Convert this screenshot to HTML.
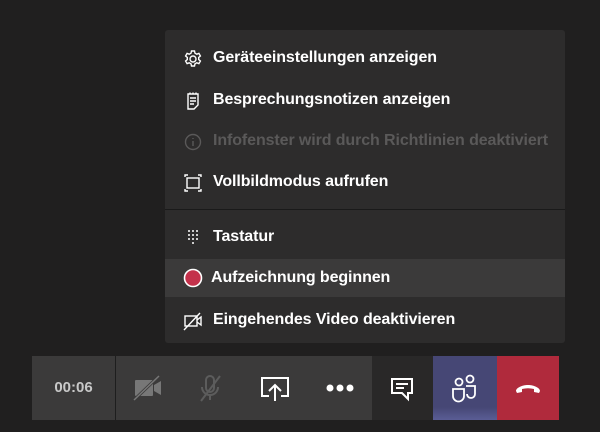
<!DOCTYPE html><html><head><style>
body{margin:0;width:600px;height:432px;background:#201f1f;font-family:"Liberation Sans",sans-serif;position:relative;overflow:hidden}
.menu{position:absolute;left:165px;top:30px;width:400px;height:313px;background:#2d2c2c;border-radius:3px}
.row{position:absolute;left:0;width:400px;height:40px;color:#fff;font-size:16px;font-weight:bold;}
.row span{position:absolute;left:48px;top:11px;letter-spacing:-0.1px}
.row svg{position:absolute;left:18px;top:11px}
.sep{position:absolute;left:0;top:179px;width:400px;height:1px;background:#1a1a1a}
.bar{position:absolute;top:356px;height:64px}
</style></head><body>
<div class="menu">
<div class="row" style="top:8px"><svg width="20" height="20" viewBox="0 0 20 20" fill="none" stroke="#fff" stroke-width="1.4"><circle cx="10" cy="10" r="3"/><path d="M8.5 2h3l.5 2.2 1.8 1 2.1-.8 1.5 2.6-1.7 1.5v2l1.7 1.5-1.5 2.6-2.1-.8-1.8 1-.5 2.2h-3l-.5-2.2-1.8-1-2.1.8-1.5-2.6 1.7-1.5v-2L2.6 7l1.5-2.6 2.1.8 1.8-1z"/></svg><span>Geräteeinstellungen anzeigen</span></div>
<div class="row" style="top:50px"><svg width="20" height="20" viewBox="0 0 20 20" fill="none" stroke="#fff" stroke-width="1.4"><path d="M5 3h10v11l-4 4H5z M7 7h6M7 10h6M7 13h4M7 1.5v2M10 1.5v2M13 1.5v2"/></svg><span>Besprechungsnotizen anzeigen</span></div>
<div class="row" style="top:91px;color:#5a5959"><svg width="20" height="20" viewBox="0 0 20 20" fill="none" stroke="#5a5959" stroke-width="1.4"><circle cx="10" cy="10" r="7.5"/><path d="M10 9v5M10 6v1"/></svg><span>Infofenster wird durch Richtlinien deaktiviert</span></div>
<div class="row" style="top:132px"><svg width="20" height="20" viewBox="0 0 20 20" fill="none" stroke="#fff" stroke-width="1.4"><rect x="4" y="5" width="12" height="10"/><path d="M2 4v-2h3M15 2h3v2M18 16v2h-3M5 18H2v-2"/></svg><span>Vollbildmodus aufrufen</span></div>
<div class="sep"></div>
<div class="row" style="top:187px"><svg width="20" height="20" viewBox="0 0 20 20" fill="#fff"><circle cx="6" cy="3" r="1"/><circle cx="10" cy="3" r="1"/><circle cx="14" cy="3" r="1"/><circle cx="6" cy="7" r="1"/><circle cx="10" cy="7" r="1"/><circle cx="14" cy="7" r="1"/><circle cx="6" cy="11" r="1"/><circle cx="10" cy="11" r="1"/><circle cx="14" cy="11" r="1"/><circle cx="10" cy="15" r="1"/></svg><span>Tastatur</span></div>
<div class="row" style="top:229px;height:38px;background:#3b3a3a"><svg width="20" height="20" viewBox="0 0 20 20" style="top:9px"><circle cx="10" cy="10" r="8.5" fill="#c4314b" stroke="#fff" stroke-width="1.6"/></svg><span style="left:46px;top:10px">Aufzeichnung beginnen</span></div>
<div class="row" style="top:270px"><svg width="20" height="20" viewBox="0 0 20 20" fill="none" stroke="#fff" stroke-width="1.4"><rect x="2" y="5" width="12" height="10"/><path d="M14 9l4-3v8l-4-3M1 19L17 2"/></svg><span>Eingehendes Video deaktivieren</span></div>
</div>
<div class="bar" style="left:32px;width:83px;background:#3b3a3a;color:#c8c8c8;font-weight:bold;font-size:15px;text-align:center;line-height:64px">00:06</div>
<div class="bar" style="left:115px;width:1px;background:#1e1e1e"></div>
<div class="bar" style="left:116px;width:256px;background:#3b3a3a"></div>
<svg class="bar" style="left:116px" width="256" height="64" viewBox="0 0 256 64">
<g fill="#777"><rect x="19" y="24" width="18" height="16" rx="1"/><path d="M38 29l7-4v14l-7-4z"/></g><path d="M18 44L43 20" stroke="#3b3a3a" stroke-width="3"/><path d="M18 44L43 20" stroke="#777" stroke-width="1.5"/>
<g stroke="#5c5c5c" stroke-width="2" fill="none"><rect x="90" y="20" width="8" height="16" rx="4"/><path d="M86 31a8 8 0 0016 0M94 39v5M85 45l19-25"/></g>
<g stroke="#fff" stroke-width="2" fill="none"><path d="M153 40h-7V22h26v18h-7"/><path d="M159 45V30M153 35l6-6 6 6"/></g>
<g fill="#fff"><circle cx="214" cy="32" r="3.5"/><circle cx="224" cy="32" r="3.5"/><circle cx="234" cy="32" r="3.5"/></g>
</svg>
<div class="bar" style="left:372px;width:61px;background:#292828"></div>
<svg class="bar" style="left:372px" width="61" height="64"><g stroke="#fff" stroke-width="2" fill="none"><path d="M20 23h20v14h-4v6l-6-6H20z"/><path d="M24 28h12M24 32h8"/></g></svg>
<div class="bar" style="left:433px;width:64px;background:linear-gradient(#464775,#464775 80%,#5a5d95)"></div>
<svg class="bar" style="left:433px" width="64" height="64"><g stroke="#fff" stroke-width="1.8" fill="none"><circle cx="26" cy="26" r="3.5"/><circle cx="37" cy="23" r="3.5"/><path d="M20 33h11v7a5 5 0 01-11 0z"/><path d="M33 30h9v8a4 4 0 01-8 0"/></g></svg>
<div class="bar" style="left:497px;width:62px;background:#b02a3c"></div>
<svg class="bar" style="left:497px" width="62" height="64"><path d="M19 35c0-3 6-6 12-6s12 3 12 6l-1 2-5-1v-3c-4-1-8-1-12 0v3l-5 1z" fill="#fff"/></svg>
</body></html>
